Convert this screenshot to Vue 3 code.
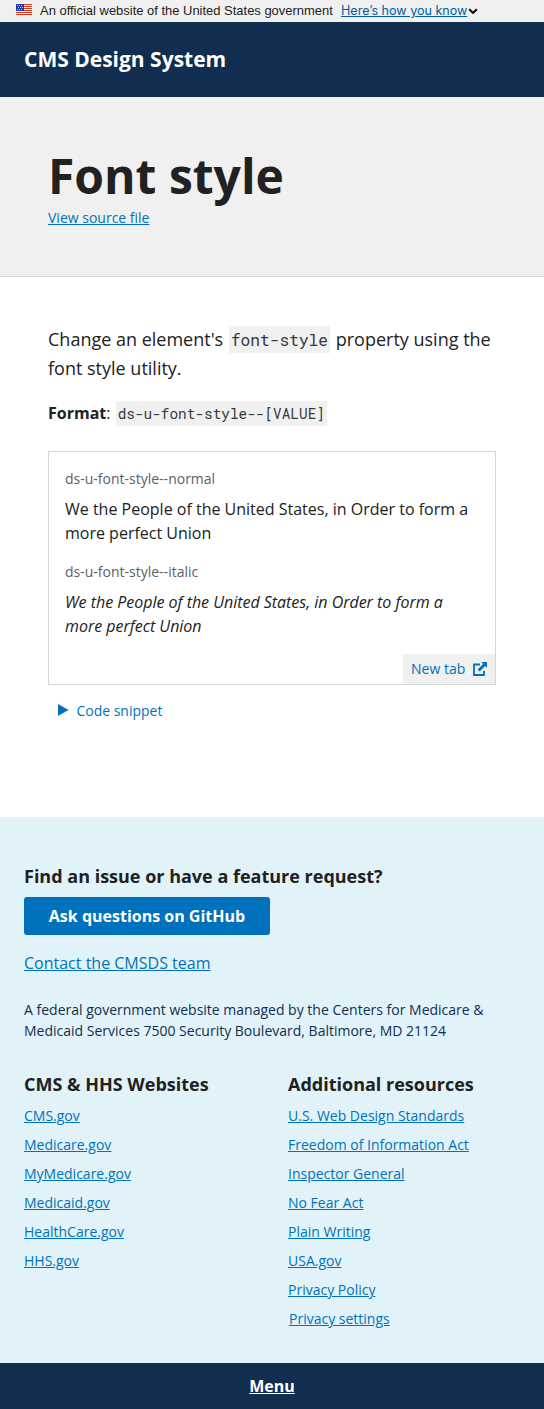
<script setup>
const samples = [
  { name: 'ds-u-font-style--normal', italic: false },
  { name: 'ds-u-font-style--italic', italic: true }
]
const sites = ['CMS.gov', 'Medicare.gov', 'MyMedicare.gov', 'Medicaid.gov', 'HealthCare.gov', 'HHS.gov']
const resources = [
  'U.S. Web Design Standards',
  'Freedom of Information Act',
  'Inspector General',
  'No Fear Act',
  'Plain Writing',
  'USA.gov',
  'Privacy Policy'
]
</script>

<template>
  <div class="page">
    <div class="banner">
      <svg class="flag" width="16" height="11" viewBox="0 0 16 11" shape-rendering="crispEdges">
        <rect width="16" height="11" fill="#fff" />
        <path fill="#e0361c" d="M0 0h16v1H0zM0 2h16v1H0zM0 4h16v1H0zM0 6h16v1H0zM0 8h16v1H0zM0 10h16v1H0z" />
        <rect width="8" height="7" fill="#1f33b5" />
        <path fill="#c9cff2" d="M1 1h1v1H1zM3 1h1v1H3zM5 1h1v1H5zM2 3h1v1H2zM4 3h1v1H4zM6 3h1v1H6zM1 5h1v1H1zM3 5h1v1H3zM5 5h1v1H5z" />
      </svg>
      <span class="official">An official website of the United States government</span>
      <a class="know">Here’s how you know</a>
      <svg class="chevron" width="10" height="7" viewBox="0 0 10 7"><path d="M1.200 1.300 5 4.900 8.800 1.300" fill="none" stroke="#000" stroke-width="2.1" /></svg>
    </div>
    <header class="masthead">CMS Design System</header>
    <section class="hero">
      <h1>Font style</h1>
      <a class="small-link">View source file</a>
    </section>
    <main>
      <p class="lead">Change an element's <code>font-style</code> property using the font style utility.</p>
      <p class="format"><b>Format</b>: <code>ds-u-font-style--[VALUE]</code></p>
      <div class="example">
        <div v-for="s in samples" :key="s.name" class="sample">
          <div class="label">{{ s.name }}</div>
          <p :class="{ italic: s.italic }">We the People of the United States, in Order to form a more perfect Union</p>
        </div>
        <a class="newtab">
          New tab
          <svg width="14" height="14" viewBox="0 0 14 14">
            <path d="M7 2.500H1v10.500h10V9" fill="none" stroke="#0071bc" stroke-width="1.800" />
            <path d="M8.200 0H14v5.800l-1.900-1.900-5.500 5.500-2-2 5.500-5.500z" fill="#0071bc" />
          </svg>
        </a>
      </div>
      <div class="snippet">
        <svg width="11" height="12" viewBox="0 0 11 12"><path d="M0 0 10.500 6 0 12z" fill="#0071bc" /></svg>
        <span>Code snippet</span>
      </div>
    </main>
    <footer>
      <h2>Find an issue or have a feature request?</h2>
      <a class="button">Ask questions on GitHub</a>
      <a class="contact">Contact the CMSDS team</a>
      <p class="address">A federal government website managed by the Centers for Medicare &amp; Medicaid Services 7500 Security Boulevard, Baltimore, MD 21124</p>
      <div class="columns">
        <div>
          <h2>CMS &amp; HHS Websites</h2>
          <ul><li v-for="s in sites" :key="s"><a>{{ s }}</a></li></ul>
        </div>
        <div>
          <h2>Additional resources</h2>
          <ul>
            <li v-for="r in resources" :key="r"><a>{{ r }}</a></li>
            <li class="settings"><a>Privacy settings</a></li>
          </ul>
        </div>
      </div>
    </footer>
    <div class="menu"><a>Menu</a></div>
  </div>
</template>

<style>
body { margin: 0; background: #fff; }
</style>

<style scoped>
.page { width: 544px; height: 1409px; display: flex; flex-direction: column; font-family: "Open Sans", sans-serif; font-size: 16px; line-height: 24px; color: #212121; }
h1, h2, p, ul { margin: 0; padding: 0; }
a { color: #0071bc; text-decoration: underline; }
.banner { height: 22px; background: #f0f0f0; display: flex; align-items: center; padding-left: 16px; font: 12.96px/22px "Liberation Sans", sans-serif; white-space: nowrap; }
.flag { margin: -3px 8px 0 0; }
.official { width: 301px; }
.know { font-family: Inter, sans-serif; font-size: 12.55px; color: #005ea2; width: 126px; }
.chevron { margin: 1px 0 0 1px; }
.masthead { height: 75px; box-sizing: border-box; padding: 0 24px; background: #112e51; color: #fff; font-weight: 700; font-size: 21px; line-height: 75px; }
.hero { height: 180px; box-sizing: border-box; padding: 48px 48px 0; background: #f0f0f0; border-bottom: 1px solid #d6d7d9; }
h1 { font-size: 48px; line-height: 62px; font-weight: 700; }
.small-link { display: block; font-size: 14px; line-height: 21px; }
main { height: 540px; box-sizing: border-box; padding: 48px 48px 0; }
.lead { font-size: 18px; line-height: 29px; }
code { font-family: "Roboto Mono", "DejaVu Sans Mono", monospace; font-size: .9em; background: #f0f0f0; color: #323a45; padding: 3px 2px; margin: 0 1px; }
.format { margin-top: 18px; }
.example { position: relative; height: 234px; box-sizing: border-box; border: 1px solid #d6d7d9; margin-top: 25px; padding: 16px; }
.sample { height: 93px; }
.label { font-size: 14px; line-height: 21px; color: #5b616b; margin-bottom: 8px; }
.italic { font-style: italic; letter-spacing: -.02px; }
.newtab { position: absolute; right: 0; bottom: 0; width: 92px; height: 30px; box-sizing: border-box; padding: 0 8px; background: #f0f0f0; font-size: 14px; display: flex; align-items: center; justify-content: space-between; text-decoration: none; }
.snippet { display: flex; align-items: center; gap: 7.4px; margin: 15px 0 0 10px; height: 21px; font-size: 14px; color: #0071bc; }
.snippet svg { margin-top: -2px; }
footer { height: 546px; box-sizing: border-box; padding: 47px 24px 0; background: #e1f3f8; }
footer h2 { font-size: 18px; line-height: 24px; font-weight: 700; }
.button { display: block; box-sizing: border-box; width: 246px; height: 38px; margin-top: 9px; border-radius: 3px; background: #0071bc; color: #fff; font-weight: 700; text-align: center; line-height: 38px; text-decoration: none; }
.contact { display: block; margin-top: 16px; }
.address { font-size: 14px; line-height: 21px; margin-top: 24px; color: #112e51; }
.columns { display: grid; grid-template-columns: 264px 1fr; margin-top: 31px; }
ul { list-style: none; margin-top: 9px; font-size: 14px; line-height: 21px; }
li { margin-bottom: 8px; }
.settings { padding-left: 1px; }
.menu { height: 46px; background: #112e51; text-align: center; line-height: 46px; font-weight: 700; }
.menu a { color: #fff; }
</style>
